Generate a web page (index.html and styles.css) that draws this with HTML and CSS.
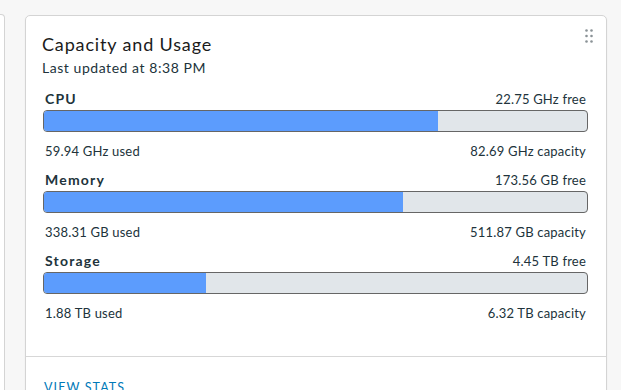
FILE: index.html
```html
<!DOCTYPE html>
<html>
<head>
<meta charset="utf-8">
<link rel="stylesheet" href="styles.css">
</head>
<body>
<div class="page">
  <div class="stub-card"></div>
  <section class="card">
    <div class="card-header">
      <h2 class="title">Capacity and Usage</h2>
      <div class="subtitle">Last updated at 8:38 PM</div>
      <svg class="handle" width="8" height="14" viewBox="0 0 8 14">
        <circle cx="1.5" cy="1.5" r="1.3"/><circle cx="6.5" cy="1.5" r="1.3"/>
        <circle cx="1.5" cy="7" r="1.3"/><circle cx="6.5" cy="7" r="1.3"/>
        <circle cx="1.5" cy="12.5" r="1.3"/><circle cx="6.5" cy="12.5" r="1.3"/>
      </svg>
    </div>
    <div class="card-body">
      <div class="metric">
        <div class="row"><span class="label">CPU</span><span>22.75 GHz free</span></div>
        <div class="bar"><div class="fill" style="width:72.49%"></div></div>
        <div class="row"><span>59.94 GHz used</span><span>82.69 GHz capacity</span></div>
      </div>
      <div class="metric">
        <div class="row"><span class="label">Memory</span><span>173.56 GB free</span></div>
        <div class="bar"><div class="fill" style="width:66.09%"></div></div>
        <div class="row"><span>338.31 GB used</span><span>511.87 GB capacity</span></div>
      </div>
      <div class="metric">
        <div class="row"><span class="label">Storage</span><span>4.45 TB free</span></div>
        <div class="bar"><div class="fill" style="width:29.75%"></div></div>
        <div class="row"><span>1.88 TB used</span><span>6.32 TB capacity</span></div>
      </div>
    </div>
    <div class="card-footer">
      <a class="link">VIEW STATS</a>
    </div>
  </section>
</div>
</body>
</html>
```

FILE: styles.css
```css
* { box-sizing: border-box; }
html, body { margin: 0; padding: 0; }
body {
  background: #f7f7f7;
  font-family: Lato, "Open Sans", sans-serif;
  color: #21333b;
  width: 621px;
  height: 390px;
  overflow: hidden;
}
.page {
  display: flex;
  align-items: flex-start;
  gap: 20px;
}
.stub-card {
  width: 5px;
  height: 380px;
  margin-top: 14px;
  background: #fff;
  border: 1px solid #d4d4d4;
  border-left: none;
  border-radius: 0 4px 0 0;
}
.card {
  width: 582px;
  height: 380px;
  margin-top: 15px;
  background: #fff;
  border: 1px solid #d4d4d4;
  border-radius: 5px;
  box-shadow: 0 1px 2px rgba(0,0,0,0.06);
}
.card-header {
  position: relative;
  padding: 16px 18px 0 16px;
}
.title {
  margin: 0;
  font-size: 18px;
  font-weight: 400;
  line-height: 24px;
  letter-spacing: 0.85px;
  color: #1b1b1b;
}
.subtitle {
  margin-top: 3px;
  font-size: 14px;
  line-height: 18px;
  letter-spacing: 0.55px;
}
.handle {
  position: absolute;
  top: 13px;
  right: 13px;
  fill: #8a9296;
}
.card-body {
  padding: 13px 18px 0 17px;
  display: flex;
  flex-direction: column;
  gap: 11px;
}
.row {
  display: flex;
  justify-content: space-between;
  padding: 0 2px;
  font-size: 13px;
  line-height: 18px;
  letter-spacing: 0.2px;
}
.label {
  font-weight: 700;
  font-size: 14px;
  letter-spacing: 1.2px;
}
.bar {
  margin: 2px 0 10px;
  height: 22px;
  border: 1px solid #666;
  border-radius: 4px;
  background: #e1e6ea;
  overflow: hidden;
}
.fill {
  height: 100%;
  background: #5c9cfd;
}
.card-footer {
  margin-top: 34px;
  border-top: 1px solid #d7d7d7;
  padding: 19px 18px 0 18px;
}
.link {
  font-size: 12.5px;
  line-height: 18px;
  letter-spacing: 1.1px;
  color: #0079b8;
}
```
